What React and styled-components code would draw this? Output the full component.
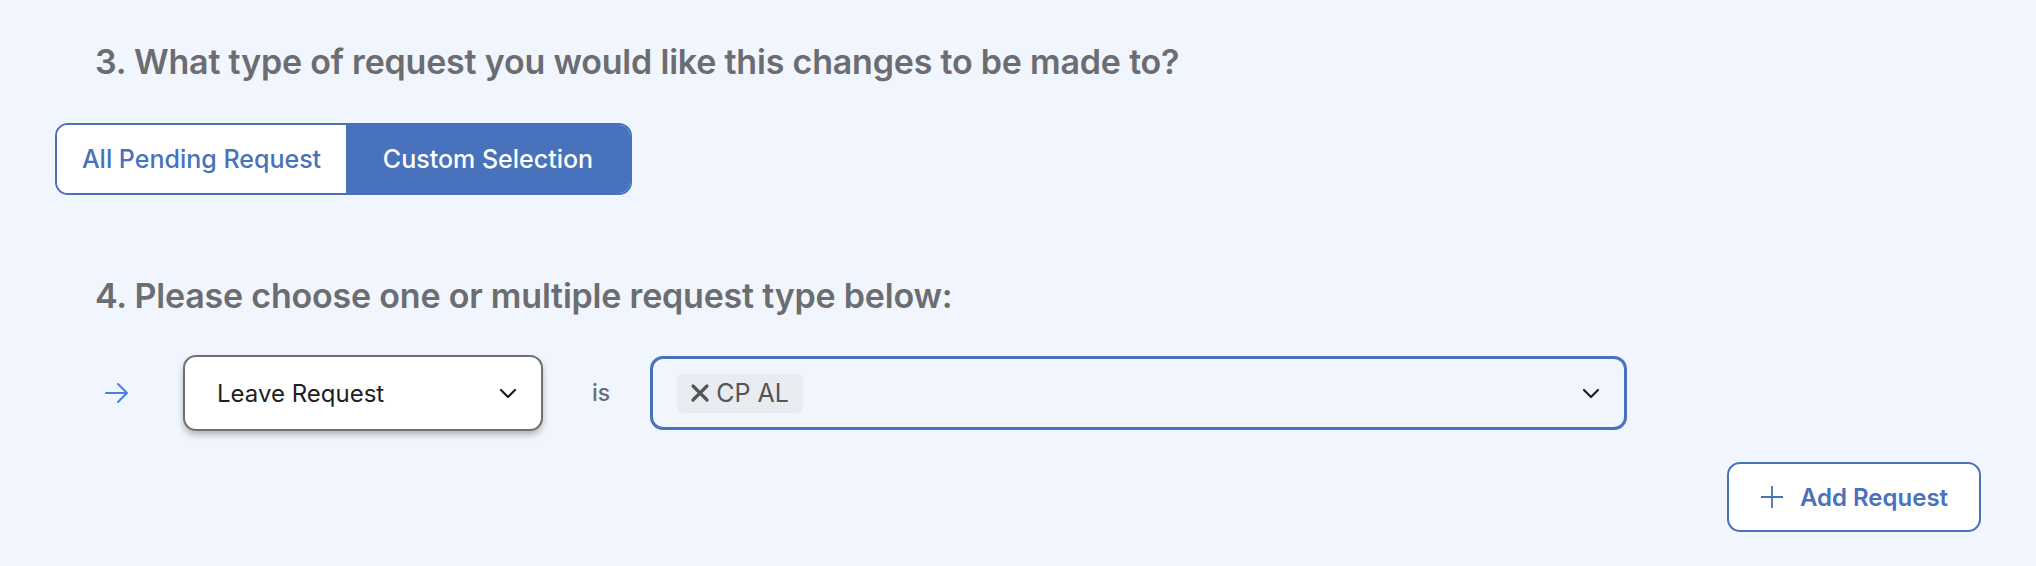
import React from 'react';
import styled, { createGlobalStyle } from 'styled-components';

const Colors = {
    page: '#f1f5fd',
    blue: '#4872bc',
    heading: '#6b6d71',
    text: '#1f1f1f',
    chip: '#e8ebf0',
};

const GlobalStyle = createGlobalStyle`
    html, body {
        margin: 0;
        padding: 0;
        background: ${Colors.page};
        font-family: Inter, "Noto Sans", sans-serif;
    }
`;

const Page = styled.div`
    width: 2036px;
    height: 566px;
    box-sizing: border-box;
    padding: 42px 55px 0;
    background: ${Colors.page};
    display: flex;
    flex-direction: column;
`;

const Question = styled.h2`
    margin: ${props => props.top || 0}px 0 0 40px;
    font-size: 34px;
    line-height: 40px;
    font-weight: 600;
    color: ${Colors.heading};
    letter-spacing: -0.2px;
`;

const Toggle = styled.div`
    display: flex;
    align-self: flex-start;
    margin-top: 41px;
    height: 72px;
    border: 2px solid ${Colors.blue};
    border-radius: 13px;
    overflow: hidden;
    box-sizing: border-box;
`;

const ToggleOption = styled.button`
    border: none;
    margin: 0;
    width: ${props => props.width}px;
    background: ${props => props.active ? Colors.blue : '#fff'};
    color: ${props => props.active ? '#fff' : Colors.blue};
    font-family: inherit;
    font-size: 25px;
    font-weight: 500;
    cursor: pointer;
`;

const Row = styled.div`
    display: flex;
    align-items: center;
    margin-top: 39px;
    height: 76px;
`;

const Arrow = styled.svg`
    width: 28px;
    height: 28px;
    margin-left: 48px;
    margin-right: 52px;
`;

const Select = styled.div`
    width: 360px;
    height: 76px;
    box-sizing: border-box;
    display: flex;
    align-items: center;
    justify-content: space-between;
    padding: 0 22px 0 32px;
    background: #fff;
    border: 2px solid #707070;
    border-radius: 13px;
    box-shadow: 0 4px 6px rgba(0, 0, 0, 0.25);
    font-size: 24px;
    color: ${Colors.text};
`;

const Is = styled.span`
    margin: 0 40px 0 49px;
    font-size: 23px;
    font-weight: 500;
    color: ${Colors.heading};
`;

const MultiSelect = styled.div`
    width: 977px;
    height: 74px;
    box-sizing: border-box;
    display: flex;
    align-items: center;
    justify-content: space-between;
    padding: 0 22px 0 24px;
    border: 3px solid ${Colors.blue};
    border-radius: 13px;
`;

const Chip = styled.span`
    display: inline-flex;
    align-items: center;
    gap: 5px;
    height: 39px;
    padding: 0 14px 0 12px;
    background: ${Colors.chip};
    border-radius: 6px;
    font-size: 25px;
    color: #555;
`;

const AddButton = styled.button`
    align-self: flex-end;
    margin-top: 31px;
    width: 254px;
    height: 70px;
    display: flex;
    align-items: center;
    justify-content: center;
    gap: 16px;
    background: #fff;
    border: 2px solid ${Colors.blue};
    border-radius: 13px;
    color: ${Colors.blue};
    font-family: inherit;
    font-size: 24px;
    font-weight: 600;
    cursor: pointer;
`;

const Chevron = () => (
    <svg width="22" height="22" viewBox="0 0 22 22">
        <polyline points="4,8 11,15 18,8" fill="none" stroke="#1f1f1f" strokeWidth="2.2" strokeLinecap="round" strokeLinejoin="round" />
    </svg>
);

function App() {
    return (
        <Page>
            <GlobalStyle />
            <Question>3. What type of request you would like this changes to be made to?</Question>
            <Toggle>
                <ToggleOption width={289}>All Pending Request</ToggleOption>
                <ToggleOption width={284} active>Custom Selection</ToggleOption>
            </Toggle>
            <Question top={81}>4. Please choose one or multiple request type below:</Question>
            <Row>
                <Arrow viewBox="0 0 28 28">
                    <path d="M3 14 H24 M15 5 L24 14 L15 23" fill="none" stroke="#4a80e6" strokeWidth="2" strokeLinecap="round" strokeLinejoin="round" />
                </Arrow>
                <Select>
                    Leave Request
                    <Chevron />
                </Select>
                <Is>is</Is>
                <MultiSelect>
                    <Chip>
                        <svg width="22" height="22" viewBox="0 0 22 22">
                            <path d="M4 4 L18 18 M18 4 L4 18" stroke="#555" strokeWidth="3.2" strokeLinecap="round" />
                        </svg>
                        CP AL
                    </Chip>
                    <Chevron />
                </MultiSelect>
            </Row>
            <AddButton>
                <svg width="24" height="24" viewBox="0 0 24 24">
                    <path d="M12 1 V23 M1 12 H23" stroke={Colors.blue} strokeWidth="1.8" />
                </svg>
                Add Request
            </AddButton>
        </Page>
    );
}

export default App;
